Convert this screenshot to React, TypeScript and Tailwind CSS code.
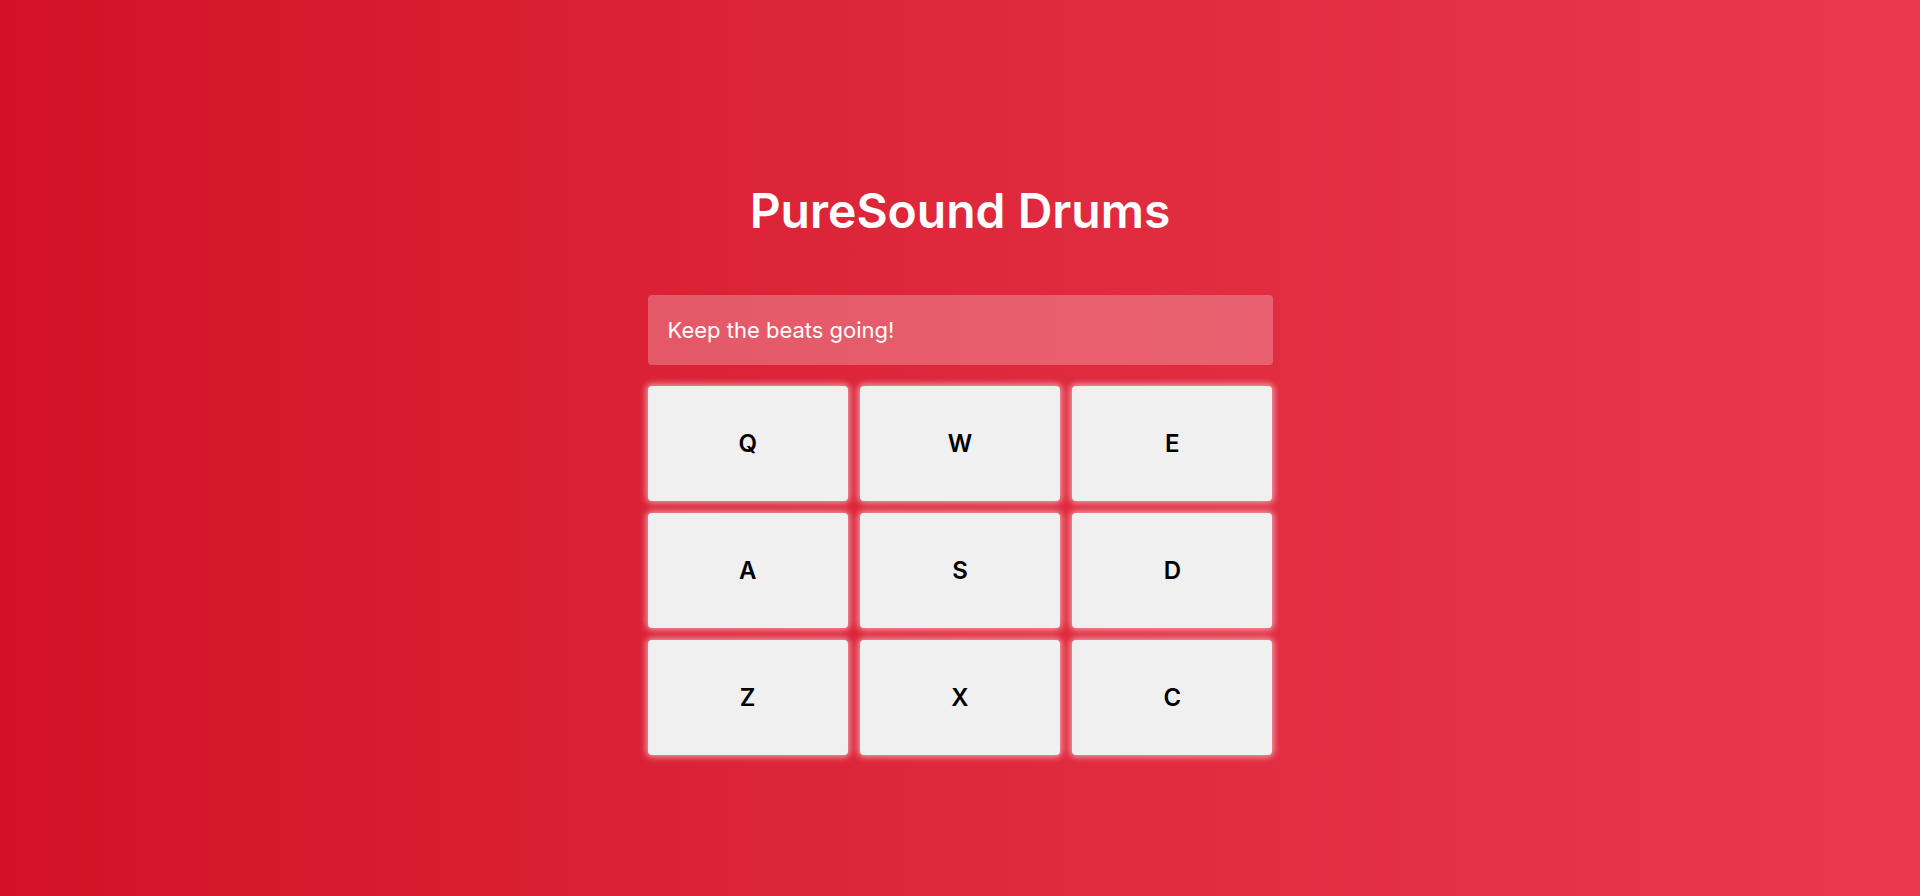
import React from "react";

const keys = ["Q", "W", "E", "A", "S", "D", "Z", "X", "C"];

const App: React.FC = () => {
    return (
        <div className="min-h-screen w-full bg-gradient-to-r from-[#d31027] to-[#ea384d] font-['Inter',sans-serif] text-white">
            <div className="flex flex-col items-center pt-[187px]">
                <h1 className="text-5xl leading-none font-semibold">PureSound Drums</h1>
                <div className="mt-[60px] w-[625px]">
                    {/* display */}
                    <div className="flex h-[70px] items-center rounded bg-white/25 px-5 text-[22px]">
                        Keep the beats going!
                    </div>
                    {/* pads */}
                    <div className="mt-[21px] grid grid-cols-3 gap-x-3 gap-y-[12px]">
                        {keys.map((k) => (
                            <button
                                key={k}
                                className="flex h-[115px] items-center justify-center rounded bg-[#f0f0f0] text-2xl font-semibold text-black shadow-[0_0_6px_2px_rgba(255,255,255,0.55)]"
                            >
                                {k}
                            </button>
                        ))}
                    </div>
                </div>
            </div>
        </div>
    );
};

export default App;
